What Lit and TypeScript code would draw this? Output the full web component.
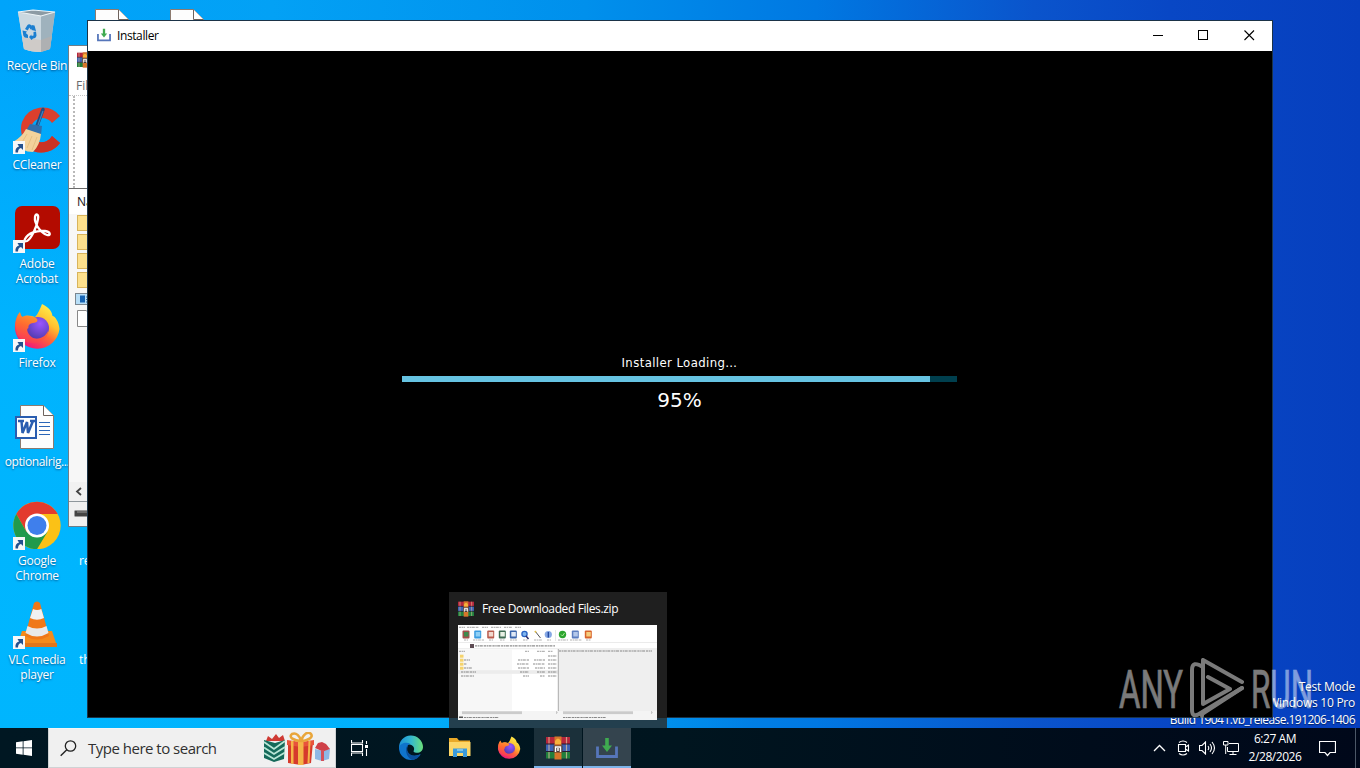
import { LitElement, html, svg, css } from "lit";
import { customElement, property } from "lit/decorators.js";

const recycleBin = html`<svg width="48" height="48" viewBox="0 0 48 48">
  <path d="M5 6 L42 6 L37 43 Q24 48 11 43 Z" fill="#c3cfd6"/>
  <path d="M5 6 L28 10 L28 46 Q18 46 11 43 Z" fill="#cbd8e0"/>
  <path d="M28 10 L42 6 L37 43 L28 46 Z" fill="#9fb2bd"/>
  <path d="M9 31 L28 34 L28 46 Q18 46 11 43 Z" fill="#cfcbc8"/>
  <path d="M28 34 L39 30 L37 43 L28 46 Z" fill="#aeb0b2"/>
  <path d="M5 6 L20 4 L42 6 L28 10 Z" fill="#8c9ba4" stroke="#eef4f7" stroke-width="1.2"/>
  <g fill="#1b7fd0">
    <path d="M12 23 L14.500 19 Q16 17.500 18 19 L20 22 L17.500 23.500 L16.300 21.500 L14.800 24.500 Z"/>
    <path d="M18.500 19 L21.500 19.500 L23 25 L18.500 24 Z"/>
    <path d="M20.500 26 L23 25.500 L23.500 29.500 Q23 32.500 20 32.500 L18.500 34 L16 31 L18.500 28.500 V30 L20.500 29.500 Z"/>
    <path d="M9.500 24.500 L14 25.500 L12.800 27 L15 29 V32 Q11 32 10.300 29.500 Z"/>
  </g></svg>`;

const ccleaner = html`<svg width="48" height="48" viewBox="0 -1 48 48">
  <path d="M47 10 A22 22 0 0 0 9 16 Q7 22 9 30 L22 34 L26 36 A12 12 0 0 0 39 30 L47 37 A23 23 0 0 1 20 45 L20 30 A11.500 11.500 0 0 1 39 17 Z" fill="#dc3f2d"/>
  <path d="M47 37 A23 23 0 0 1 20 45 L26 36 A12 12 0 0 0 39 30 Z" fill="#cb3224"/>
  <path d="M30 3.500 L24 20" stroke="#1d4e86" stroke-width="3.600" stroke-linecap="round"/>
  <path d="M30 5 L25 19" stroke="#3f82c0" stroke-width="1.200"/>
  <path d="M17 18 L29 20 L28 29 L13 25 Z" fill="#2f6fae"/>
  <path d="M13 23 L28 28 Q27 39 20 46 Q9 46 0 36 Q9 31 13 23 Z" fill="#f3d29b"/>
  <path d="M14 28 L8 38 M19 30 L14 42 M24 31 L19 44" stroke="#e3bd80" stroke-width="0.900" fill="none"/></svg>`;

const acrobat = html`<svg width="48" height="48" viewBox="0 0 48 48">
  <rect x="2" y="2" width="45" height="43" rx="7" fill="#b30b00"/>
  <path d="M12 35 C15 29 24 26 32 27 C38 28 38 32 34 31 C28 29 21 20 22 13 C22.500 9 26 10 25 15 C24 23 18 35 14 37 C11 38 11 37 12 35 Z" fill="none" stroke="#fff" stroke-width="2.300" stroke-linejoin="round"/></svg>`;

const firefox = (s: number) => html`<svg width=${s} height=${s} viewBox="0 0 48 48">
  <defs>
    <linearGradient id="ffa" x1="0.850" y1="0.050" x2="0.250" y2="0.950"><stop offset="0" stop-color="#fff44f"/><stop offset="0.350" stop-color="#ffc02f"/><stop offset="0.600" stop-color="#ff6a36"/><stop offset="1" stop-color="#f0157c"/></linearGradient>
    <linearGradient id="ffc" x1="0.700" y1="0" x2="0.300" y2="1"><stop offset="0" stop-color="#ffa82b"/><stop offset="0.500" stop-color="#ff6a30"/><stop offset="1" stop-color="#f8355c"/></linearGradient>
    <radialGradient id="ffb" cx="0.600" cy="0.300" r="0.800"><stop offset="0" stop-color="#9a55ff"/><stop offset="1" stop-color="#4a3aa8"/></radialGradient>
  </defs>
  <path d="M29 1 C37 5 39 9 39.500 13 C42 13 46 19 46.500 26 A22.500 22.500 0 0 1 2 27 C1.500 18 4 12 7 9 C7.500 12 8 13 9.500 14 C14 11 19 13 22 14 C25 11 27 6 29 1 Z" fill="url(#ffa)"/>
  <circle cx="25" cy="25" r="11" fill="url(#ffb)"/>
  <path d="M2.500 22 C3 15 5 12 7 9.500 C7.500 12 8 13 9.500 14 C14 12 18 13 22 14.500 C26 16 25 20 20 20 C17 20.500 15 22 15.500 25 C13 26 13 32 18 34.500 C24 37.500 32 35 35 28 C36 40 12 46 4 31 Z" fill="url(#ffc)"/></svg>`;

const wordDoc = html`<svg width="48" height="48" viewBox="0 0 48 48">
  <path d="M7.500 3.500 H30.500 L40.500 13.500 V46.500 H7.500 Z" fill="#fdfdfd" stroke="#8c7b70"/>
  <path d="M30.500 3.500 V13.500 H40.500" fill="#fff" stroke="#6e625c"/>
  <path d="M26 20.500 H37 M26 24.500 H37 M26 28.500 H37 M26 32.500 H37" stroke="#2b66b8"/>
  <rect x="3" y="15" width="20" height="21" fill="#fff" stroke="#2a5db0" stroke-width="2"/>
  <path d="M5 19 H11 M8.500 19 L9.500 31 L14 20 L15 31 L20 19 M17 19 H22" fill="none" stroke="#2a5db0" stroke-width="2.500"/></svg>`;

const chrome = html`<svg width="48" height="48" viewBox="0 -1 48 48">
  <circle cx="24" cy="23.500" r="23.700" fill="#fbc116"/>
  <path d="M24 24 L24 12 L44.700 12 A23.700 23.700 0 0 0 3.300 12 L13.600 30 Z" fill="#e33b2e"/>
  <path d="M3.300 12 A23.700 23.700 0 0 0 24 47.200 L34.400 30 L24 24 L13.600 30 Z" fill="#219a4c"/>
  <circle cx="24" cy="23.500" r="12" fill="#fff"/><circle cx="24" cy="23.500" r="9.500" fill="#3f7fec"/></svg>`;

const vlc = html`<svg width="48" height="48" viewBox="0 0 48 48">
  <path d="M9 31 L39 31 L44 46 L4 46 Z" fill="#f48b1c"/><path d="M4 43 H44 V47 H4 Z" fill="#e0761a"/>
  <path d="M21 3 Q24 0 27 3 L36 36 Q24 43 12 36 Z" fill="#f07818"/>
  <path d="M20 9 Q24 11 28.300 9 L31 18 Q24 21.500 17 18 Z" fill="#f1f1f1"/>
  <path d="M14.500 26 Q24 31 33.500 26 L35.500 33 Q24 40 12.500 33 Z" fill="#e9e9e9"/></svg>`;

const rar = (s: number) => html`<svg width=${s} height=${s} viewBox="0 0 24 24">
  <rect x="0" y="1" width="24" height="7" fill="#b5263c"/><rect x="0" y="8" width="24" height="7.500" fill="#3d62b5"/><rect x="0" y="15.500" width="24" height="7" fill="#1f7f3c"/>
  <path d="M3 1 V22.500 M20.500 1 V22.500" stroke="#e9c8a0" stroke-width="1.200" opacity="0.700"/>
  <path d="M0 8 H24 M0 15.500 H24" stroke="#261a30"/>
  <rect x="8.500" y="0.500" width="7" height="23" fill="#d5762b"/>
  <path d="M9 5 Q12 0 15 5 L15 8 H9 Z" fill="#f6b33c"/>
  <rect x="7.500" y="9.500" width="9" height="7" fill="#4c3b35"/>
  <path d="M9.500 16 V11 H14.500 V16 M12 12 V15" stroke="#fff" stroke-width="1.500" fill="none"/></svg>`;

const download = (w: number) => html`<svg width=${w} height=${w} viewBox="0 0 22 22">
  <path d="M1.500 9.500 V19.500 H20.500 V9.500" fill="none" stroke="#5676ba" stroke-width="2.800"/>
  <path d="M9.200 1 H12.800 V8.500 H16 L11 15 L6 8.500 H9.200 Z" fill="#3fab50"/></svg>`;

const edge = html`<svg width="26" height="26" viewBox="0 0 26 26">
  <defs><linearGradient id="ea" x1="0" y1="0.300" x2="1" y2="0.300"><stop offset="0" stop-color="#1a8fd8"/><stop offset="0.500" stop-color="#34b8cf"/><stop offset="1" stop-color="#6be07a"/></linearGradient></defs>
  <path d="M1 13 A12 12 0 0 1 25 12 C25 16.500 21 18.500 17 17.500 C15 17 15.500 16 16 15 C17 11 13 9 9 9.500 C5 10 2 12 1 15 Z" fill="url(#ea)"/>
  <path d="M1 13 C2 8 8 7 12 8.500 C9 10 8 13 9 16 C11 21 17 22 22.500 19 C20 23.500 16 25 13 25 A12 12 0 0 1 1 13 Z" fill="#0f74cc"/>
  <path d="M9 11 C7 15 8 22 14 24.900 C18 24.800 21 22.500 22.800 19.200 C17 22 11 21 9.500 16 C9 14 9.300 12.500 10 11 Z" fill="#0a4f9c"/></svg>`;

const explorer = html`<svg width="24" height="22" viewBox="0 0 24 22">
  <path d="M1 1 H9 L11 3.500 H22 V19 H1 Z" fill="#e9a928"/><path d="M1 5 H22.500 V19 H1 Z" fill="#fcd667"/>
  <path d="M5 20 V11.500 H19 V20 H15 V16 H9 V20 Z" fill="#3b9bdc"/><path d="M9 12 H15 V14 H9 Z" fill="#7cc4ec"/></svg>`;

const gifts = html`<svg width="68" height="34" viewBox="0 0 68 34">
  <path d="M3 9 L5 4 L9 7 L13 2 L16 6 L20 3 L22 9 Z" fill="#cf3a34"/>
  <path d="M1 8 L12 11 L22 8 L21 27 L11 30 L1 26 Z" fill="#156a5a"/>
  <path d="M1 10 L11 17 L22 9 M1 15.500 L11 22 L22 15 M1 21 L11 27 L22 20.500" stroke="#b9e6d6" stroke-width="1.800" fill="none"/>
  <path d="M25 10 L38 12 L50 10 L48 31 L38 33 L25 31 Z" fill="#d63a2c"/>
  <path d="M24 8 L38 10 L51 8 L51 13 L38 15 L24 13 Z" fill="#e8533c"/>
  <path d="M35 10 H40.500 V33 H35 Z M28 9 L30.500 9 L30.500 32 L28 31.500 Z M45.500 9 L47.500 9 L46.500 31 L44.500 31 Z" fill="#f4b548"/>
  <path d="M38 9 C31 9 25 5 29 2 C33 0 37 4 38 9 C40 2 45 -1 48 2 C51 6 43 9 38 9" fill="none" stroke="#e9a63b" stroke-width="2.600"/>
  <path d="M52 17 L60 19 L67 17 L66 27 L59 29 L52 27 Z" fill="#8db8e6"/>
  <path d="M52 16 L55 11 L59 10 L63 12 L67 17 L60 19.500 Z" fill="#cf4048"/>
  <path d="M58 18 H61 V29 H58 Z" fill="#d4505a"/></svg>`;

const dash = (x: number, y: number, w: number, c = "#777") =>
  svg`<path d="M${x} ${y} h${w}" stroke=${c} stroke-width="1.200" stroke-dasharray="2.300 0.600 1.400 0.500 3 0.900" opacity="0.550"/>`;

const toolIcons: Array<[number, string, string]> = [
  [8, "#a34f4a", "#3f8a4c"], [19.7, "#3b9ce0", "#8fd0f6"], [32.7, "#b95c4e", "#f1d9cf"], [44.3, "#3e6b52", "#e8f0e4"],
  [55.3, "#3a64ab", "#dfe8f5"], [117.3, "#5d7fc0", "#b4c8ea"], [130.3, "#d8642c", "#f6cd7c"],
];

const rows: Array<[number, number, number, number]> = [
  [31, 0, 0, 0], [35, 6, 11, 11], [39, 3, 12, 12], [43, 8, 11, 10], [47, 15, 9, 8], [51, 13, 6, 5],
];

const preview = html`<svg class="preview" width="199" height="95" viewBox="0 0 199 95">
  <rect width="199" height="95" fill="#fff"/>
  ${dash(1, 2.3, 6)}${dash(9, 2.3, 12)}${dash(24, 2.3, 6)}${dash(33, 2.3, 10)}${dash(46, 2.3, 8)}${dash(57, 2.3, 6)}
  ${toolIcons.map(([x, a, b]) => svg`<rect x=${x - 3.5} y="5.500" width="7" height="8" rx="1" fill=${a}/><rect x=${x - 2} y="7" width="4.500" height="4.500" fill=${b}/>`)}
  <circle cx="66.500" cy="9" r="2.600" fill="#7fb5ee" stroke="#2a63c4" stroke-width="1.300"/><path d="M68 11 L70.500 14" stroke="#2b2b6b" stroke-width="1.500"/>
  <path d="M77 6 L82.500 13" stroke="#555" stroke-width="1"/><path d="M77 6 l1 1.500" stroke="#e3c04a" stroke-width="1.500"/>
  <circle cx="90.300" cy="9.500" r="3.600" fill="#86a8e4"/><path d="M90.300 7 V12.500" stroke="#1f459e" stroke-width="1.300"/>
  <circle cx="104.500" cy="9.500" r="3.700" fill="#2ca52f"/><path d="M103 9.500 l1.500 1.500 l2 -3" stroke="#c8f3b0" fill="none" stroke-width="0.800"/>
  <path d="M97.500 5 V16" stroke="#ddd" stroke-width="0.700"/>
  ${[6, 15, 31, 42, 52, 65, 76, 89, 100, 112, 128].map((x, i) => dash(x, 15, [4, 11, 4, 5, 7, 5, 8, 4, 10, 12, 5][i]))}
  <path d="M0 17.500 H199 M0 23.700 H199" stroke="#ddd" stroke-width="0.600"/>
  <rect x="12" y="19" width="4" height="4" fill="#5d4b53"/>${dash(17, 20.9, 80, "#333")}
  <rect x="0" y="24.500" width="54" height="61" fill="#f7f7f7"/>
  ${dash(1, 26.3, 6)}${dash(67, 26.3, 4)}${dash(79, 26.3, 8)}${dash(90, 26.3, 5)}
  <rect x="0" y="45.200" width="100" height="3.600" fill="#ececec"/>
  ${rows.map(([y, n, a, b]) => svg`
    ${y < 46 ? svg`<rect x="2" y=${y - 1.3} width="3.500" height="3" fill="#f5d36c"/>` : ""}
    ${n ? dash(y > 46 ? 3 : 6, y, n, "#333") : ""}${a ? dash(71 - a, y, a, "#333") : ""}${b ? dash(87 - b, y, b, "#333") : ""}${dash(90, y, 9, "#333")}`)}
  <rect x="100.500" y="24" width="98.500" height="66" fill="#efefef"/><path d="M100.300 24 V90" stroke="#888" stroke-width="0.700"/>
  ${dash(101, 26, 93, "#333")}
  <rect x="0" y="86" width="199" height="9" fill="#f4f4f4"/>
  <rect x="4" y="86.300" width="60" height="2.800" fill="#cbcbcb"/><rect x="105" y="86.300" width="70" height="2.800" fill="#cbcbcb"/>
  <path d="M98 86.500 l1.300 1 l-1.300 1 M193 86.500 l1.300 1 l-1.300 1" stroke="#888" fill="none" stroke-width="0.600"/>
  <rect x="1" y="91.500" width="4" height="1.500" fill="#555"/>${dash(6, 92.5, 35, "#333")}${dash(105, 92.5, 43, "#333")}</svg>`;

@customElement("desktop-icon")
class DesktopIcon extends LitElement {
  @property() label = "";
  @property({ type: Boolean }) shortcut = false;
  static styles = css`
    :host { display: flex; flex-direction: column; align-items: center; width: 74px; height: 99px; box-sizing: border-box; padding-top: 6px; flex: none; }
    .art { position: relative; width: 48px; height: 48px; }
    .arrow { position: absolute; left: 0; bottom: -1px; }
    .label { margin-top: 4px; width: 78px; text-align: center; white-space: pre; color: #fff; font: 12px/15px "Open Sans", "Noto Sans", sans-serif; letter-spacing: var(--track, -0.2px); text-shadow: 0 1px 2px rgba(0, 40, 90, 0.65); }
  `;
  render() {
    return html`<div class="art"><slot></slot>
      ${this.shortcut
        ? html`<svg class="arrow" width="12" height="13" viewBox="0 0 12 13"><rect width="12" height="13" fill="#f6f7f8"/><path d="M2.500 11.500 C2 8 3.500 6 6 5.500 L4.500 3 H10 V9 L8 7 C6 7.500 5 9 5 11.500 Z" fill="#24518e"/></svg>`
        : ""}</div>
      <div class="label">${this.label}</div>`;
  }
}

@customElement("archive-window")
class ArchiveWindow extends LitElement {
  static styles = css`
    :host { display: flex; flex-direction: column; box-sizing: border-box; background: #fff; border: 1px solid #6d7d88; font: 12px/16px "Open Sans", sans-serif; overflow: hidden; color: #111; }
    .title { height: 31px; padding: 6px 0 0 8px; box-sizing: border-box; flex: none; }
    .menu { height: 19px; padding: 1px 0 0 7px; box-sizing: border-box; color: #6a6a6a; border-bottom: 1px dotted #c4c4c4; flex: none; }
    .tools { height: 92px; margin-left: 4px; border-left: 2px dotted #b9b9b9; box-sizing: border-box; flex: none; display: flex; align-items: flex-end; }
    .tools svg { margin: 0 0 13px 12px; }
    .list { flex: 1; border-top: 1px solid #6a6a6a; background: linear-gradient(#fff 25px, #f7f7f7 25px); }
    .head { height: 25px; line-height: 25px; padding-left: 8px; }
    .row { height: 19px; padding-left: 8px; display: flex; align-items: center; }
    .row.sel { padding-left: 6px; }
    .row svg { display: block; }
    .scroll { height: 19px; background: #f1f1f1; flex: none; padding: 5px 0 0 6px; box-sizing: border-box; }
    .status { height: 25px; background: #f0f0f0; border-top: 1px solid #8f979c; flex: none; padding: 8px 0 0 5px; box-sizing: border-box; }
    .scroll svg, .status svg { display: block; }
  `;
  render() {
    const folder = html`<div class="row"><svg width="18" height="17"><rect x="0.500" y="0.500" width="18" height="15" fill="#fce08d" stroke="#d8b45c"/></svg></div>`;
    return html`
      <div class="title">${rar(16)}</div>
      <div class="menu">File</div>
      <div class="tools"><svg width="4" height="3"><rect width="4" height="2" fill="#333"/></svg></div>
      <div class="list">
        <div class="head">Name</div>
        ${folder}${folder}${folder}${folder}
        <div class="row sel"><svg width="22" height="13"><rect x="0.500" y="0.500" width="24" height="11" fill="#b7def7" stroke="#7b8790"/><rect x="5" y="2.500" width="5" height="7" fill="#1665b5"/><path d="M11 4 h6 M11 6.500 h6 M11 9 h6" stroke="#2c6da8"/></svg></div>
        <div class="row"><svg width="16" height="17"><path d="M0.500 0.500 H9 L15 5 V16.500 H0.500 Z" fill="#fff" stroke="#888"/></svg></div>
      </div>
      <div class="scroll"><svg width="8" height="9"><path d="M6 1 L2 4.500 L6 8" fill="none" stroke="#444" stroke-width="1.800"/></svg></div>
      <div class="status"><svg width="20" height="8"><rect x="0.500" y="0.500" width="20" height="6" rx="1" fill="#444" stroke="#999"/><path d="M3 2 H20" stroke="#999"/></svg></div>`;
  }
}

@customElement("installer-window")
class InstallerWindow extends LitElement {
  @property({ type: Number }) progress = 95;
  static styles = css`
    :host { display: flex; flex-direction: column; box-sizing: border-box; border: 1px solid #1b3347; background: #000; }
    .bar { height: 30px; flex: none; display: flex; align-items: center; background: #fff; padding-left: 9px; font: 12px/16px "Open Sans", sans-serif; color: #000; }
    .bar > svg { display: block; margin-bottom: 2px; }
    .name { margin-left: 6px; flex: 1; padding-bottom: 1px; letter-spacing: -0.4px; }
    .ctl { display: flex; }
    .btn { width: 45.500px; height: 29px; padding-bottom: 1px; box-sizing: border-box; display: flex; align-items: center; justify-content: center; }
    .body { flex: 1; display: flex; flex-direction: column; align-items: center; padding: 303px 1px 0 0; color: #fff; font-family: "DejaVu Sans", sans-serif; }
    .text { font-size: 13px; line-height: 18px; letter-spacing: 0.400px; font-family: "DejaVu Sans Condensed", "DejaVu Sans", sans-serif; font-stretch: condensed; }
    .track { width: 555px; height: 6px; background: #003f4e; margin-top: 4px; }
    .fill { height: 6px; background: #66c3e2; }
    .pct { font-size: 20px; line-height: 26px; margin-top: 5px; }
  `;
  render() {
    return html`
      <div class="bar">${download(14)}<span class="name">Installer</span>
        <div class="ctl">
          <span class="btn"><svg width="11" height="11"><path d="M0 5.500 H10" stroke="#000"/></svg></span>
          <span class="btn"><svg width="11" height="11"><rect x="0.500" y="0.500" width="9" height="9" fill="none" stroke="#000"/></svg></span>
          <span class="btn"><svg width="11" height="11"><path d="M0.500 0.500 L10 10 M10 0.500 L0.500 10" stroke="#000" stroke-width="1.100"/></svg></span>
        </div></div>
      <div class="body">
        <div class="text">Installer Loading…</div>
        <div class="track"><div class="fill" style="width:${(this.progress + 0.15).toFixed(2)}%"></div></div>
        <div class="pct">${this.progress}%</div>
      </div>`;
  }
}

@customElement("task-bar")
class TaskBar extends LitElement {
  static styles = css`
    :host { display: flex; height: 40px; background: linear-gradient(90deg, #001722 0%, #00151f 50%, #000c1b 80%, #00081a 100%); font-family: "Open Sans", sans-serif; }
    svg { display: block; }
    .cell { width: 48px; margin-right: 1px; display: flex; align-items: center; justify-content: center; box-sizing: border-box; }
    .start { margin: 0; }
    .view { margin-right: 3px; padding-right: 1px; }
    .search { width: 288px; box-sizing: border-box; background: #f0f0f0; border: 1px solid #cfd2d4; border-top-color: #f5f5f5; display: flex; align-items: center; padding: 0 4px 0 11px; color: #303030; font-size: 15px; letter-spacing: -0.500px; }
    .search .q { flex: 1; margin-left: 11px; padding-bottom: 1px; white-space: nowrap; }
    .search .q + svg { margin-top: 2px; }
    .open { border-bottom: 2px solid #7db4ea; padding-top: 2px; background: #1b303a; }
    .active { background: #34444e; }
    .tray { margin-left: auto; display: flex; align-items: center; color: #fff; }
    .tray .i { width: 24px; display: flex; justify-content: center; }
    .clock { width: 64px; text-align: center; font-size: 12px; line-height: 18px; letter-spacing: -0.450px; }
    .note { width: 41px; display: flex; justify-content: center; }
    .peek { width: 4px; height: 40px; border-left: 1px solid #4c5867; margin-left: 7px; }
  `;
  render() {
    return html`
      <div class="cell start"><svg width="16" height="16" viewBox="0 0 16 16"><path d="M0 2.200 L6.700 1.300 V7.500 H0 Z M7.500 1.200 L16 0 V7.500 H7.500 Z M0 8.300 H6.700 V14.700 L0 13.800 Z M7.500 8.300 H16 V16 L7.500 14.800 Z" fill="#fff"/></svg></div>
      <div class="search">
        <svg width="17" height="17" viewBox="0 0 17 17"><circle cx="10.500" cy="6" r="5.200" fill="none" stroke="#222" stroke-width="1.300"/><path d="M6.800 9.700 L0.700 15.800" stroke="#222" stroke-width="1.400"/></svg>
        <span class="q">Type here to search</span>${gifts}</div>
      <div class="cell view"><svg width="17" height="16" viewBox="0 0 17 16"><path d="M0.500 0 V3 H11.500 V0 M0.500 16 V13 H11.500 V16 M0.500 4.500 H11.500 V11.500 H0.500 Z M15.500 1 V4 M15.500 9 V16" fill="none" stroke="#fff" stroke-width="1.100"/><rect x="14" y="5" width="3" height="3" fill="#fff"/></svg></div>
      <div class="cell">${edge}</div>
      <div class="cell">${explorer}</div>
      <div class="cell">${firefox(24)}</div>
      <div class="cell open">${rar(24)}</div>
      <div class="cell open active">${download(22)}</div>
      <div class="tray">
        <span class="i"><svg width="13" height="8"><path d="M1 7 L6.500 1.500 L12 7" fill="none" stroke="#fff" stroke-width="1.300"/></svg></span>
        <span class="i"><svg width="13" height="16" viewBox="0 0 13 16"><path d="M2 2.500 Q6 -0.500 10 2.500 M2 13.500 Q6 16.500 10 13.500 M1.500 4.500 H8.500 V11.500 H1.500 Z M8.500 7 L11.500 5 V11 L8.500 9" fill="none" stroke="#fff" stroke-width="1.100"/></svg></span>
        <span class="i"><svg width="17" height="14" viewBox="0 0 17 14"><path d="M0.500 4.500 H3 L6.500 1 V13 L3 9.500 H0.500 Z M9 5 Q10.500 7 9 9 M11 3 Q14 7 11 11 M13 1 Q18 7 13 13" fill="none" stroke="#fff" stroke-width="1.100"/></svg></span>
        <span class="i"><svg width="17" height="14" viewBox="0 0 17 14"><path d="M4.500 6 V10.500 H15.500 V2.500 H6 M10 10.500 V13.500 M6.500 13.500 H13.500 M0.500 0.500 H5 V4 H0.500 Z M2.700 4 V13" fill="none" stroke="#fff"/></svg></span>
        <div class="clock"><div>6:27 AM</div><div>2/28/2026</div></div>
        <span class="note"><svg width="17" height="17" viewBox="0 0 17 17"><path d="M0.500 1.500 H16.500 V12.500 H11 L8.500 15.500 L6 12.500 H0.500 Z" fill="none" stroke="#fff" stroke-width="1.200"/></svg></span>
        <span class="peek"></span>
      </div>`;
  }
}

@customElement("app-root")
class AppRoot extends LitElement {
  static styles = css`
    :host { display: flex; flex-direction: column; position: relative; width: 1360px; height: 768px; overflow: hidden; font-family: "Open Sans", sans-serif;
      background:
        radial-gradient(ellipse 760px 620px at 0 640px, rgba(0, 184, 255, 0.900) 0%, rgba(0, 184, 255, 0.750) 50%, rgba(0, 184, 255, 0) 100%),
        linear-gradient(90deg, #00a4fb 0%, #03a1f5 20%, #0090ec 43%, #0078e2 60%, #0a54cc 76%, #0847c5 86%, #063fbe 100%); }
    .desk { flex: 1; min-height: 0; position: relative; overflow: hidden; }
    .icons { display: flex; gap: 1px; }
    .col { display: flex; flex-direction: column; }
    .tight { --track: -0.380px; }
    .cut { height: 99px; box-sizing: border-box; padding: 58px 0 0 4px; color: #fff; font-size: 12px; line-height: 15px; letter-spacing: -0.150px; }
    .spacer { height: 396px; }
    .mark { position: absolute; right: 5px; bottom: 0; text-align: right; color: #fff; font-size: 12px; line-height: 16px; text-shadow: 0 1px 1px rgba(0, 0, 0, 0.500); letter-spacing: -0.250px; white-space: nowrap; }
    .build { letter-spacing: -0.550px; padding-top: 1px; }
    .archive { position: absolute; left: 68px; top: 45px; width: 700px; height: 482px; }
    .installer { position: absolute; left: 87px; top: 20px; width: 1186px; height: 698px; }
    .flyout { position: absolute; left: 449px; top: 592px; width: 218px; height: 136px; box-sizing: border-box; padding: 8px 9px; background: linear-gradient(#1f1f1f 126px, #233f4e 126px); color: #fff; }
    .flyout .cap { display: flex; align-items: center; gap: 8px; height: 17px; font-size: 12px; letter-spacing: -0.380px; white-space: nowrap; }
    .flyout .cap svg { display: block; }
    .preview { display: block; margin-top: 8px; }
    .brand { position: absolute; left: 1110px; top: 650px; }
    .brand text { font-family: Roboto, sans-serif; font-weight: 400; font-size: 53px; stroke: #fff; stroke-width: 0.700px; }
  `;
  render() {
    return html`
      <div class="desk">
        <div class="icons">
          <div class="col">
            <desktop-icon label="Recycle Bin">${recycleBin}</desktop-icon>
            <desktop-icon label="CCleaner" shortcut>${ccleaner}</desktop-icon>
            <desktop-icon label=${"Adobe\nAcrobat"} shortcut>${acrobat}</desktop-icon>
            <desktop-icon label="Firefox" shortcut>${firefox(48)}</desktop-icon>
            <desktop-icon class="tight" label="optionalrig...">${wordDoc}</desktop-icon>
            <desktop-icon label=${"Google\nChrome"} shortcut>${chrome}</desktop-icon>
            <desktop-icon label=${"VLC media\nplayer"} shortcut>${vlc}</desktop-icon>
          </div>
          <div class="col">
            <desktop-icon>${wordDoc}</desktop-icon>
            <div class="spacer"></div>
            <div class="cut">re</div>
            <div class="cut">th</div>
          </div>
          <div class="col"><desktop-icon>${wordDoc}</desktop-icon></div>
        </div>
        <div class="mark"><div>Test Mode</div><div>Windows 10 Pro</div><div class="build">Build 19041.vb_release.191206-1406</div></div>
        <archive-window class="archive"></archive-window>
        <installer-window class="installer"></installer-window>
        <div class="flyout"><div class="cap">${rar(16)}<span>Free Downloaded Files.zip</span></div>${preview}</div>
        <svg class="brand" width="210" height="78" viewBox="0 0 210 78">
          <g fill="#fff" opacity="0.480">
            <text x="9" y="58" textLength="64" lengthAdjust="spacingAndGlyphs">ANY</text>
            <text x="141" y="58" textLength="62" lengthAdjust="spacingAndGlyphs">RUN</text>
          </g>
          <g fill="none" stroke="#fff" stroke-width="4" stroke-linejoin="round" stroke-linecap="round" opacity="0.480">
            <path d="M93 17 Q82 10 82 20 V60 Q82 68 89 64 L132 38"/>
            <path d="M132 32 L93 10 V54 L120 39 L98 27 M132 38 L92 64 V66"/>
          </g></svg>
      </div>
      <task-bar></task-bar>`;
  }
}
